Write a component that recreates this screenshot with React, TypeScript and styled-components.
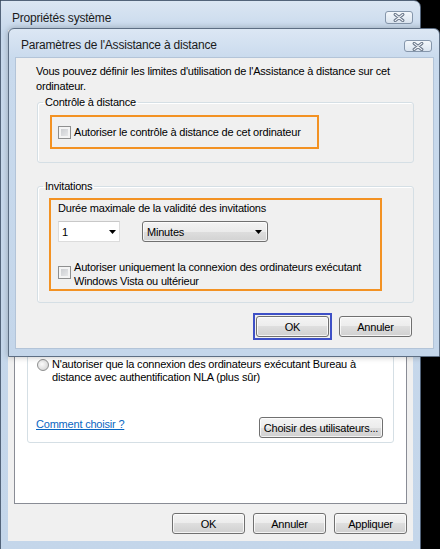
import React from 'react';
import styled, { createGlobalStyle } from 'styled-components';

const UI_FONT = `"Liberation Sans", Arial, sans-serif`;

const GlobalStyle = createGlobalStyle`
  html, body { margin: 0; padding: 0; background: #000; overflow: hidden; }
  body { width: 440px; height: 549px; font-family: ${UI_FONT}; }
  #root { width: 440px; height: 549px; overflow: hidden; }
  * { box-sizing: border-box; }
`;

const Desktop = styled.div`
  position: relative;
  width: 440px;
  height: 549px;
  overflow: hidden;
  background: #000;
`;

const Window = styled.div`
  width: 421px;
  height: 556px;
  display: flex;
  flex-direction: column;
  border: 1px solid #53647a;
  border-radius: 0 7px 0 0;
  background: linear-gradient(#dbe6f3 0px, #c8d9ec 30px, #c4d6ea 100%);
`;

const Dialog = styled.div`
  position: absolute;
  left: 8px;
  top: 28px;
  width: 432px;
  display: flex;
  flex-direction: column;
  border: 1px solid #5d6e83;
  border-radius: 6px 6px 0 0;
  background: linear-gradient(#dce7f4 0px, #c9daed 30px, #c4d6ea 100%);
  padding: 0 6px 8px 7px;
  box-shadow: 0 0 6px rgba(0, 0, 0, 0.25);
`;

const TitleBar = styled.div<{ $pad: string }>`
  height: 29px;
  flex: none;
  display: flex;
  align-items: flex-start;
  justify-content: space-between;
  padding: ${(p) => p.$pad};
`;

const TitleText = styled.span`
  font-family: ${UI_FONT};
  font-size: 12px;
  line-height: 16px;
  letter-spacing: -0.2px;
  color: #1b1b1b;
`;

const CloseButton = styled.div<{ $top: number; $h: number }>`
  width: 28px;
  height: ${(p) => p.$h}px;
  margin-top: ${(p) => p.$top}px;
  border: 1px solid #8596ab;
  border-radius: 3px;
  background: linear-gradient(#f3f7fb, #dbe5f0);
  display: flex;
  align-items: center;
  justify-content: center;
`;

const WindowBody = styled.div`
  flex: 1;
  min-height: 0;
  display: flex;
  flex-direction: column;
  margin: 0 7px 14px;
  background: #f0f0f0;
  padding: 28px 6px 7px;
`;

const TabPanel = styled.div`
  flex: 1;
  min-height: 0;
  overflow: hidden;
  display: flex;
  flex-direction: column;
  justify-content: flex-end;
  background: #fff;
  border: 1px solid #898c95;
  padding: 0 12px 60px;
`;

const GroupBox = styled.fieldset<{
  $pad: string;
  $mt?: number;
  $ml?: number;
  $mr?: number;
}>`
  margin: ${(p) => p.$mt ?? 0}px ${(p) => p.$mr ?? 0}px 0 ${(p) => p.$ml ?? 0}px;
  padding: ${(p) => p.$pad};
  border: 1px solid #d5dfe5;
  border-radius: 3px;
  min-width: 0;
  flex: none;
  box-shadow: inset 1px 1px 0 #fff;
`;

const Legend = styled.legend`
  margin-left: 5px;
  padding: 0 2px;
  font: 11px/14px ${UI_FONT};
  letter-spacing: -0.2px;
  color: #000;
`;

const Text = styled.div<{ $lh?: number }>`
  font: 11px/${(p) => p.$lh ?? 14}px ${UI_FONT};
  letter-spacing: -0.2px;
  color: #000;
`;

const Intro = styled(Text)`
  margin-top: 6px;
  padding: 0 19px 0 20px;
`;

const DialogContent = styled.div`
  background: #f0f0f0;
  display: flex;
  flex-direction: column;
  padding-bottom: 8px;
  box-shadow: 0 0 0 1px #b3c4d8;
`;

const Highlight = styled.div<{
  $w: number;
  $h?: number;
  $ml: number;
  $mt: number;
  $pad: string;
  $row?: boolean;
}>`
  width: ${(p) => p.$w}px;
  ${(p) => (p.$h ? `height: ${p.$h}px;` : '')}
  margin: ${(p) => p.$mt}px 0 0 ${(p) => p.$ml}px;
  border: 2px solid #f39223;
  padding: ${(p) => p.$pad};
  display: flex;
  flex-direction: ${(p) => (p.$row ? 'row' : 'column')};
  ${(p) => (p.$row ? 'align-items: center;' : '')}
`;

const CheckRow = styled.div<{ $mt?: number }>`
  display: flex;
  align-items: flex-start;
  gap: 3px;
  margin-top: ${(p) => p.$mt ?? 0}px;
`;

const CheckBox = styled.span<{ $mt?: number }>`
  flex: none;
  width: 13px;
  height: 13px;
  margin-top: ${(p) => p.$mt ?? 0}px;
  border: 1px solid #8e8f8f;
  background: linear-gradient(135deg, #c4c7cb, #eeeeef);
  box-shadow: inset 0 0 0 2px #f4f4f4;
`;

const Radio = styled.span<{ $mt?: number }>`
  flex: none;
  width: 12px;
  height: 12px;
  margin: ${(p) => p.$mt ?? 0}px 0 0 1px;
  border-radius: 50%;
  border: 1px solid #8e8f8f;
  background: radial-gradient(circle at 40% 40%, #fbfbfb 0%, #e2e2e2 55%, #c9c9c9 100%);
`;

const ComboRow = styled.div`
  display: flex;
  gap: 22px;
  margin-top: 6px;
`;

const SpinBox = styled.div`
  width: 62px;
  height: 21px;
  background: #fff;
  border: 1px solid #dcdcdc;
  border-top-color: #c8c8c8;
  display: flex;
  align-items: center;
  justify-content: space-between;
  padding: 0 3px 0 3px;
  font: 11px/14px ${UI_FONT};
`;

const Combo = styled.div`
  width: 126px;
  height: 21px;
  border: 1px solid #707070;
  border-radius: 3px;
  background: linear-gradient(#f3f3f3 0%, #ebebeb 50%, #dedede 50%, #d2d2d2 100%);
  box-shadow: inset 0 0 0 1px rgba(255, 255, 255, 0.7);
  display: flex;
  align-items: center;
  justify-content: space-between;
  padding: 0 5px 0 4px;
  font: 11px/14px ${UI_FONT};
  letter-spacing: -0.2px;
`;

const Button = styled.div<{ $w: number }>`
  flex: none;
  width: ${(p) => p.$w}px;
  height: 21px;
  border: 1px solid #707070;
  border-radius: 3px;
  background: linear-gradient(#f4f4f4 0%, #ececec 50%, #dedede 50%, #d0d0d0 100%);
  box-shadow: inset 0 0 0 1px rgba(255, 255, 255, 0.75);
  display: flex;
  align-items: center;
  justify-content: center;
  font: 11px/14px ${UI_FONT};
  letter-spacing: -0.2px;
  color: #000;
  white-space: nowrap;
`;

const FocusMark = styled.div`
  border: 2px solid #3e50c6;
  padding: 1px;
  display: flex;
`;

const ButtonRow = styled.div<{ $mt: number; $gap: number; $pr: number }>`
  display: flex;
  align-items: center;
  justify-content: flex-end;
  gap: ${(p) => p.$gap}px;
  margin-top: ${(p) => p.$mt}px;
  padding-right: ${(p) => p.$pr}px;
  flex: none;
`;

const LinkRow = styled.div<{ $mt: number }>`
  display: flex;
  justify-content: space-between;
  align-items: flex-start;
  margin-top: ${(p) => p.$mt}px;
`;

const Link = styled.span`
  font: 11px/14px ${UI_FONT};
  letter-spacing: -0.2px;
  color: #0a66c2;
  text-decoration: underline;
`;

const CloseGlyph = () => (
  <svg width="12" height="9" viewBox="0 0 12 9">
    <path d="M2.2 1.4 L9.8 7.6 M9.8 1.4 L2.2 7.6" stroke="#6a7789" strokeWidth="3.2" strokeLinecap="round" />
    <path d="M2.2 1.4 L9.8 7.6 M9.8 1.4 L2.2 7.6" stroke="#f4f7fb" strokeWidth="1.2" strokeLinecap="round" />
  </svg>
);

const DropArrow = () => (
  <svg width="7" height="4" viewBox="0 0 7 4">
    <polygon points="0,0 7,0 3.5,4" fill="#000" />
  </svg>
);

export default function App() {
  return (
    <Desktop>
      <GlobalStyle />
      <Window>
        <TitleBar $pad="9px 7px 0 11px">
          <TitleText>Propriétés système</TitleText>
          <CloseButton $top={1} $h={13}>
            <CloseGlyph />
          </CloseButton>
        </TitleBar>
        <WindowBody>
          <TabPanel>
            <GroupBox $pad="40px 10px 4px 8px">
              <CheckRow>
                <Radio $mt={1} />
                <Text $lh={13}>
                  N'autoriser que la connexion des ordinateurs exécutant Bureau à distance avec authentification NLA (plus sûr)
                </Text>
              </CheckRow>
              <LinkRow $mt={33}>
                <Link>Comment choisir ?</Link>
                <Button $w={124}>Choisir des utilisateurs...</Button>
              </LinkRow>
            </GroupBox>
          </TabPanel>
          <ButtonRow $mt={9} $gap={8} $pr={0}>
            <Button $w={73}>OK</Button>
            <Button $w={73}>Annuler</Button>
            <Button $w={73}>Appliquer</Button>
          </ButtonRow>
        </WindowBody>
      </Window>

      <Dialog>
        <TitleBar $pad="8px 1px 0 5px">
          <TitleText>Paramètres de l'Assistance à distance</TitleText>
          <CloseButton $top={3} $h={12}>
            <CloseGlyph />
          </CloseButton>
        </TitleBar>
        <DialogContent>
          <Intro $lh={15}>
            Vous pouvez définir les limites d'utilisation de l'Assistance à distance sur cet ordinateur.
          </Intro>
          <GroupBox $pad="0 0 13px 0" $mt={1} $ml={21} $mr={19}>
            <Legend>Contrôle à distance</Legend>
            <Highlight $w={269} $h={34} $ml={12} $mt={6} $pad="0 0 0 6px" $row>
              <CheckRow>
                <CheckBox $mt={1} />
                <Text>Autoriser le contrôle à distance de cet ordinateur</Text>
              </CheckRow>
            </Highlight>
          </GroupBox>
          <GroupBox $pad="0 0 11px 0" $mt={16} $ml={21} $mr={19}>
            <Legend>Invitations</Legend>
            <Highlight $w={333} $ml={11} $mt={5} $pad="1px 0 1px 7px">
              <Text>Durée maximale de la validité des invitations</Text>
              <ComboRow>
                <SpinBox>
                  <span>1</span>
                  <DropArrow />
                </SpinBox>
                <Combo>
                  <span>Minutes</span>
                  <DropArrow />
                </Combo>
              </ComboRow>
              <CheckRow $mt={18}>
                <CheckBox $mt={6} />
                <Text>
                  Autoriser uniquement la connexion des ordinateurs exécutant
                  <br />
                  Windows Vista ou ultérieur
                </Text>
              </CheckRow>
            </Highlight>
          </GroupBox>
          <ButtonRow $mt={10} $gap={7} $pr={21}>
            <FocusMark>
              <Button $w={73}>OK</Button>
            </FocusMark>
            <Button $w={73}>Annuler</Button>
          </ButtonRow>
        </DialogContent>
      </Dialog>
    </Desktop>
  );
}
